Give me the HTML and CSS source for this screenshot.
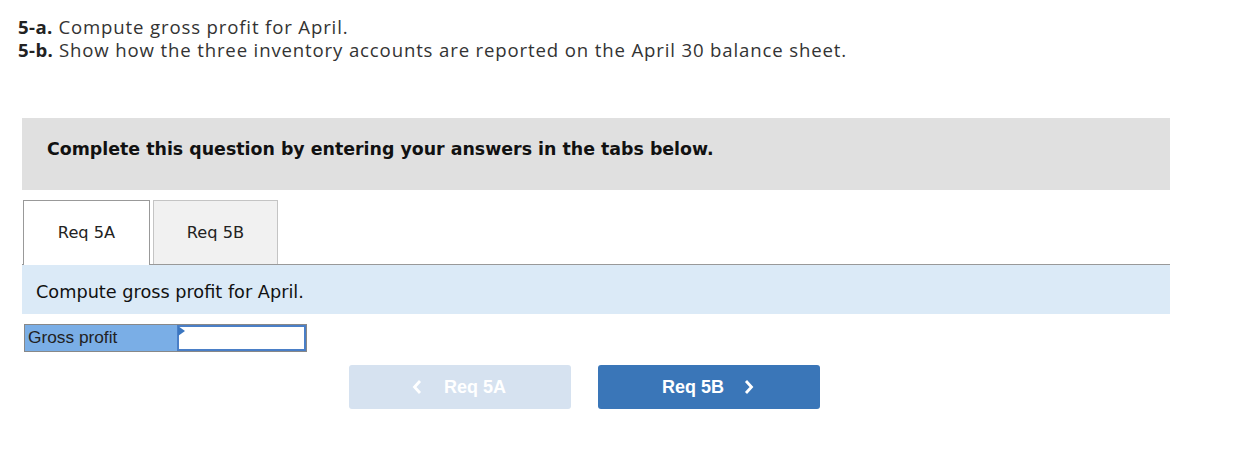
FILE: index.html
```html
<!DOCTYPE html>
<html>
<head>
<meta charset="utf-8">
<link rel="stylesheet" href="styles.css">
</head>
<body>
<div class="intro">
  <p><b>5-a.</b> Compute gross profit for April.</p>
  <p><b>5-b.</b> Show how the three inventory accounts are reported on the April 30 balance sheet.</p>
</div>
<div class="panel">
  <div class="notice">Complete this question by entering your answers in the tabs below.</div>
  <div class="tabs">
    <div class="tab active">Req 5A</div>
    <div class="tab">Req 5B</div>
  </div>
  <div class="instr">Compute gross profit for April.</div>
  <div class="row">
    <div class="label">Gross profit</div>
    <div class="input"><span class="flag"></span></div>
  </div>
  <div class="nav">
    <button class="btn prev"><svg class="chev" width="10" height="16" viewBox="0 0 10 16"><polyline points="8,2 2.5,8 8,14" fill="none" stroke="#fff" stroke-width="2.8"/></svg>Req 5A</button>
    <button class="btn next">Req 5B<svg class="chev" width="10" height="16" viewBox="0 0 10 16"><polyline points="2,2 7.5,8 2,14" fill="none" stroke="#fff" stroke-width="2.8"/></svg></button>
  </div>
</div>
</body>
</html>
```
FILE: styles.css
```css
body {
  margin: 0;
  background: #fff;
  color: #222;
}
.intro {
  padding: 15px 0 0 18px;
  font-family: "Open Sans", "Noto Sans", sans-serif;
  font-size: 18.6px;
  letter-spacing: 0.85px;
  color: #333;
  line-height: 23px;
}
.intro p { margin: 0; }
.intro b { color: #222; font-weight: 700; letter-spacing: 0.4px; }
.panel {
  margin: 57px 0 0 22px;
  width: 1148px;
  font-family: "DejaVu Sans", Verdana, sans-serif;
}
.notice {
  background: #e0e0e0;
  height: 72px;
  box-sizing: border-box;
  padding: 21px 0 0 25px;
  font-weight: bold;
  font-size: 17.4px;
  letter-spacing: 0;
  color: #111;
}
.tabs {
  margin-top: 10px;
  display: flex;
  gap: 3px;
  padding-left: 1px;
  border-bottom: 1px solid #999;
}
.tab {
  width: 125px;
  height: 64px;
  box-sizing: border-box;
  border: 1px solid #c4c4c4;
  border-bottom: none;
  background: #f1f1f1;
  display: flex;
  align-items: center;
  justify-content: center;
  font-size: 16.2px;
  color: #222;
  padding-bottom: 1px;
}
.tab.active {
  width: 127px;
  background: #fff;
  border-color: #999;
  height: 65px;
  margin-bottom: -1px;
  padding-bottom: 2px;
}
.instr {
  background: #dbeaf7;
  height: 49px;
  box-sizing: border-box;
  padding: 17px 0 0 14px;
  font-size: 17.7px;
  color: #111;
}
.row {
  margin: 10px 0 0 2px;
  display: flex;
  width: 283px;
  height: 28px;
  border: 1px solid #888;
  box-sizing: border-box;
}
.label {
  width: 152px;
  background: #7aaee6;
  font-family: "Liberation Sans", Arial, sans-serif;
  font-size: 17.3px;
  color: #222;
  padding: 2px 0 0 3px;
  box-sizing: border-box;
}
.input {
  flex: 1;
  background: #fff;
  border: 2px solid #4a7fc7;
  position: relative;
}
.flag {
  position: absolute;
  left: -1px;
  top: -1px;
  width: 0;
  height: 0;
  border-top: 5px solid transparent;
  border-bottom: 5px solid transparent;
  border-left: 7px solid #3a76c0;
}
.nav {
  margin: 13px 0 0 327px;
  display: flex;
  gap: 27px;
}
.btn {
  width: 222px;
  height: 44px;
  border: none;
  border-radius: 3px;
  font-family: "Liberation Sans", Arial, sans-serif;
  font-weight: bold;
  font-size: 18px;
  color: #fff;
  display: flex;
  align-items: center;
  justify-content: center;
  gap: 20px;
  padding: 0;
}
.btn.prev { background: #d6e2f0; gap: 22px; padding-right: 2px; }
.btn.next { background: #3a76b8; padding-right: 2px; }
.chev { display: block; }
```
